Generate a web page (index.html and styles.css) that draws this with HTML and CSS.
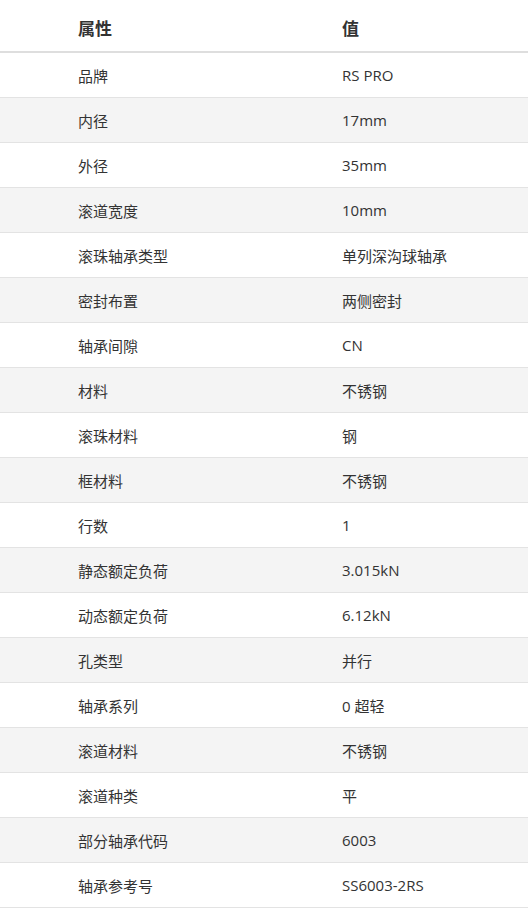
FILE: index.html
```html
<!DOCTYPE html>
<html lang="zh">
<head>
<meta charset="utf-8">
<link rel="stylesheet" href="styles.css">
</head>
<body>
<table class="spec">
<thead>
<tr><th>属性</th><th>值</th></tr>
</thead>
<tbody>
<tr><td>品牌</td><td>RS PRO</td></tr>
<tr><td>内径</td><td>17mm</td></tr>
<tr><td>外径</td><td>35mm</td></tr>
<tr><td>滚道宽度</td><td>10mm</td></tr>
<tr><td>滚珠轴承类型</td><td>单列深沟球轴承</td></tr>
<tr><td>密封布置</td><td>两侧密封</td></tr>
<tr><td>轴承间隙</td><td>CN</td></tr>
<tr><td>材料</td><td>不锈钢</td></tr>
<tr><td>滚珠材料</td><td>钢</td></tr>
<tr><td>框材料</td><td>不锈钢</td></tr>
<tr><td>行数</td><td>1</td></tr>
<tr><td>静态额定负荷</td><td>3.015kN</td></tr>
<tr><td>动态额定负荷</td><td>6.12kN</td></tr>
<tr><td>孔类型</td><td>并行</td></tr>
<tr><td>轴承系列</td><td>0 超轻</td></tr>
<tr><td>滚道材料</td><td>不锈钢</td></tr>
<tr><td>滚道种类</td><td>平</td></tr>
<tr><td>部分轴承代码</td><td>6003</td></tr>
<tr><td>轴承参考号</td><td>SS6003-2RS</td></tr>
</tbody>
</table>
</body>
</html>
```
FILE: styles.css
```css
html, body {
  margin: 0;
  padding: 0;
  background: #fff;
}
body {
  font-family: "Open Sans", "Noto Sans CJK SC", sans-serif;
  color: #333;
}
.spec {
  width: 528px;
  border-collapse: separate;
  border-spacing: 0;
  table-layout: fixed;
}
.spec th,
.spec td {
  width: 50%;
  text-align: left;
  padding: 0 0 0 78px;
  box-sizing: border-box;
}
.spec th {
  height: 53px;
  font-size: 17px;
  font-weight: 700;
  color: #333;
  border-bottom: 2px solid #dedede;
  padding-top: 4px;
}
.spec td {
  height: 45px;
  font-size: 15px;
  border-bottom: 1px solid #e3e3e3;
}
.spec tbody tr:nth-child(even) td {
  background: #f4f4f4;
}
```
